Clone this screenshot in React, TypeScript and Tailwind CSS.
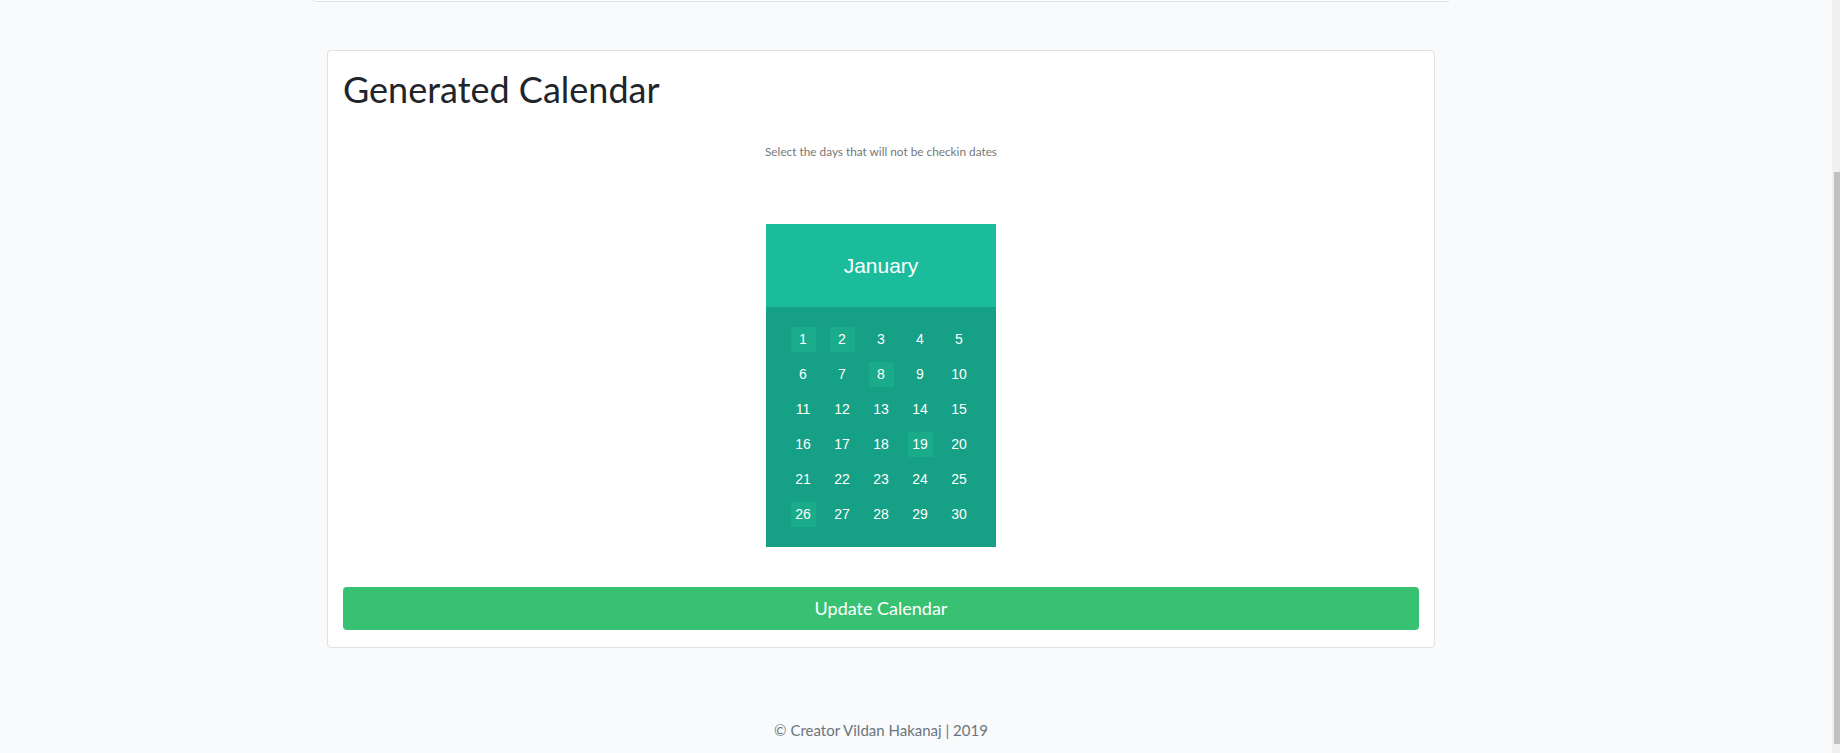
const days = Array.from({ length: 30 }, (_, i) => i + 1)
const selected = [1, 2, 8, 19, 26]

function CalendarMonth() {
  return (
    <div className="w-[230px] font-['Liberation_Sans',Arial,sans-serif] text-white">
      <div className="h-[83px] bg-[#1abc9c] flex items-center justify-center text-[21px]">
        January
      </div>
      <div className="bg-[#16a085] pt-[20px] pb-[20px] flex justify-center">
        <div className="grid grid-cols-[repeat(5,25px)] gap-x-[14px] gap-y-[10px]">
          {days.map((d) => (
            <div
              key={d}
              className={
                'w-[25px] h-[25px] flex items-center justify-center text-[14px] ' +
                (selected.includes(d) ? 'bg-[#1aab8a]' : '')
              }
            >
              {d}
            </div>
          ))}
        </div>
      </div>
    </div>
  )
}

export default function App() {
  return (
    <div className="flex min-h-[753px] bg-[#f8fafc] font-['Lato','Noto_Sans',sans-serif]">
      <div className="flex-1 flex flex-col">
        <div className="ml-[312px] w-[1138px]">
          <div className="-mt-[8px] h-[10px] border border-[#dfe0e1] rounded-[4px] bg-white" />

          <div className="mt-[48px] mx-[15px] bg-white border border-[#dfe0e1] rounded-[4px] px-[15px] pt-[15px] pb-[17px]">
            <h1 className="text-[36px] leading-[46px] text-[#212529]">Generated Calendar</h1>

            <p className="mt-[32px] text-center text-[11.8px] leading-[16px] text-[#777]">
              Select the days that will not be checkin dates
            </p>

            <div className="mt-[64px] flex justify-center">
              <CalendarMonth />
            </div>

            <button
              type="button"
              className="mt-[40px] w-full h-[43px] rounded-[4px] bg-[#38c172] text-white text-[18px]"
            >
              Update Calendar
            </button>
          </div>

          <footer className="mt-[70px] text-center text-[15px] leading-[24px] text-[#6c757d]">
            © Creator Vildan Hakanaj | 2019
          </footer>
        </div>
      </div>

      <div className="w-[8px] bg-[#f0f0f0] flex flex-col pl-[2px]">
        <div className="mt-[172px] h-[572px] bg-[#c1c1c1]" />
      </div>
    </div>
  )
}
